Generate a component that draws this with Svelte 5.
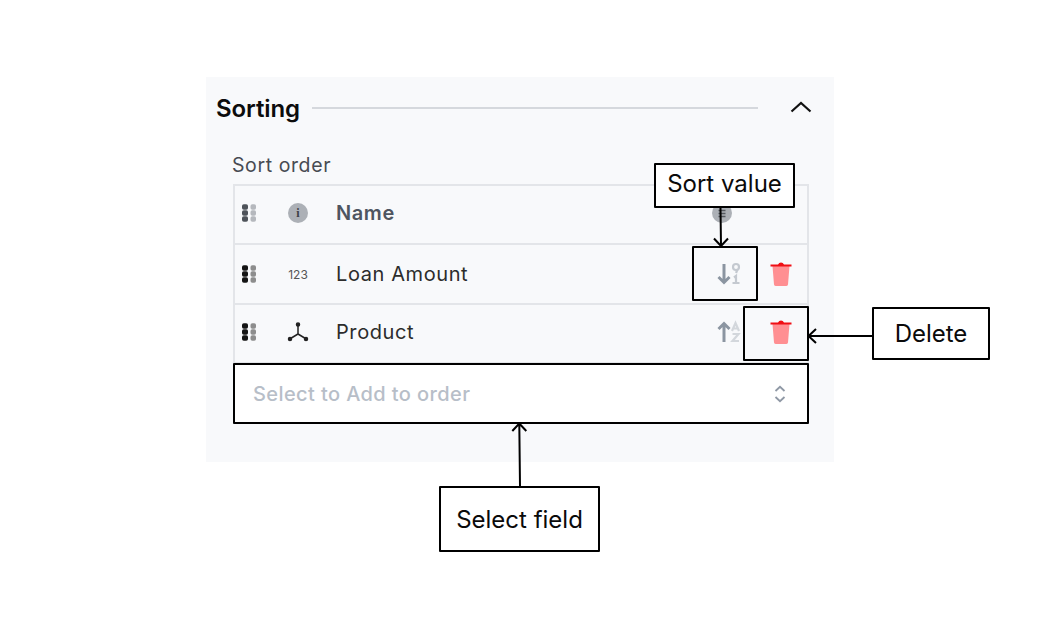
<script lang="ts">
	const rows = [
		{ name: 'Name', kind: 'info', sort: 'hidden', del: false, head: true },
		{ name: 'Loan Amount', kind: 'num', sort: 'down', del: true, head: false },
		{ name: 'Product', kind: 'tree', sort: 'up', del: true, head: false }
	];
</script>

<div class="page">
	<section class="panel">
		<header class="panel-head">
			<h2>Sorting</h2>
			<span class="rule"></span>
			<svg class="chevron" width="22" height="12" viewBox="0 0 22 12" fill="none">
				<path d="M1.500 10.500 11 2l9.500 8.500" stroke="#111" stroke-width="2.200" />
			</svg>
		</header>

		<div class="label">Sort order</div>
		<div class="table">
			{#each rows as row}
				<div class="row" class:head={row.head}>
					<svg class="grip" width="14" height="18" viewBox="0 0 14 18">
						{#each [3, 9, 15] as y}
							<rect x="0" y={y - 2.800} width="6" height="5.600" rx="1.800" class="dot-dark" />
							<rect x="8.500" y={y - 2.800} width="5.500" height="5.600" rx="1.800" class="dot-light" />
						{/each}
					</svg>
					<span class="type">
						{#if row.kind === 'info'}
							<span class="info">i</span>
						{:else if row.kind === 'num'}
							<span class="num">123</span>
						{:else}
							<svg width="22" height="20" viewBox="0 0 22 20" fill="none" stroke="#222" stroke-width="1.500">
								<path d="M11 3v9M11 12l-7.500 4.500M11 12l7.500 4.500" />
								<circle cx="11" cy="2.500" r="1.500" fill="#222" />
								<circle cx="3" cy="17" r="1.500" fill="#222" />
								<circle cx="19" cy="17" r="1.500" fill="#222" />
							</svg>
						{/if}
					</span>
					<span class="name">{row.name}</span>
					<span class="sort">
						{#if row.sort === 'hidden'}
							<svg class="sort-dot" width="20" height="20" viewBox="0 0 20 20" fill="none">
								<circle cx="10" cy="10" r="10" fill="#acb0b6" />
								<path d="M6.500 7.500h7M6.500 10.500h7M6.500 13.500h7" stroke="#55595f" stroke-width="1.400" />
							</svg>
						{:else if row.sort === 'down'}
							<svg width="26" height="24" viewBox="0 0 26 24" fill="none">
								<path d="M8 2v18.500M2.500 15 8 20.500 13.500 15" stroke="#8b95a1" stroke-width="3" />
								<circle cx="20" cy="5" r="3" stroke="#c4c9d0" stroke-width="2.200" />
								<path d="M21.500 7.500 20 11" stroke="#c4c9d0" stroke-width="2.200" />
								<path d="M18 15.500l2-1.500v6.500M16.500 21h7" stroke="#c4c9d0" stroke-width="2.200" />
							</svg>
						{:else}
							<svg width="26" height="24" viewBox="0 0 26 24" fill="none">
								<path d="M8 22V3.500M2.500 9 8 3.500 13.500 9" stroke="#8b95a1" stroke-width="3" />
								<path d="M16 11l3.500-8 3.500 8M17.200 8.500h4.600" stroke="#d3d7dc" stroke-width="2.200" />
								<path d="M16.500 14h6l-6 7h6.500" stroke="#d3d7dc" stroke-width="2.200" />
							</svg>
						{/if}
					</span>
					<span class="del">
						{#if row.del}
							<svg width="22" height="26" viewBox="0 0 22 26">
								<path d="M2.500 5h17l-1.500 18.500a2 2 0 0 1-2 1.500H6a2 2 0 0 1-2-1.500z" fill="#ff8f92" />
								<path d="M0.500 3.500h7.500q1-2 3-2t3 2h7.500v2h-21z" fill="#f00f14" />
							</svg>
						{/if}
					</span>
				</div>
			{/each}
			<div class="select">
				<span>Select to Add to order</span>
				<svg width="12" height="18" viewBox="0 0 12 18" fill="none" stroke="#8f98a5" stroke-width="1.800">
					<path d="M1.500 6 6 1.800 10.500 6M1.500 12 6 16.200 10.500 12" />
				</svg>
			</div>
		</div>
	</section>

	<!-- annotation layer -->
	<div class="mark mark-sort"></div>
	<div class="mark mark-delete"></div>
	<div class="mark mark-select"></div>

	<div class="note note-sort">Sort value</div>
	<div class="note note-delete">Delete</div>
	<div class="note note-select">Select field</div>

	<svg class="arrows" width="1040" height="620" fill="none" stroke="#000" stroke-width="2">
		<path d="M720.500 208 721 245.500M714 238.500l7 7.500 7-7.500" />
		<path d="M872 336H809M816 329l-7.500 7 7.500 7" />
		<path d="M520 486 519.300 424M512.300 431l7-7.500 7 7.500" />
	</svg>
</div>

<style>
	:global(body) {
		background: #fff;
	}

	.page {
		position: relative;
		box-sizing: border-box;
		width: 1040px;
		height: 620px;
		padding: 77px 206px 0;
		font-family: Inter, "Liberation Sans", sans-serif;
		overflow: hidden;
	}

	.panel {
		box-sizing: border-box;
		width: 628px;
		height: 385px;
		background: #f8f9fb;
		padding: 15px 22px 0 10px;
	}

	.panel-head {
		display: flex;
		align-items: center;
		height: 32px;
	}

	h2 {
		flex: none;
		margin: 0;
		width: 96px;
		font-size: 24px;
		font-weight: 600;
		letter-spacing: -0.1px;
		color: #0c0c0c;
	}

	.rule {
		flex: none;
		width: 446px;
		height: 2px;
		background: #d5d8dd;
	}

	.chevron {
		flex: none;
		margin: -3px 0 0 32px;
	}

	.label {
		margin: 30px 0 0 16px;
		height: 23px;
		line-height: 23px;
		font-size: 19.500px;
		letter-spacing: 0.6px;
		color: #474b52;
	}

	.table {
		box-sizing: border-box;
		margin: 7px 0 0 17px;
		width: 576px;
		height: 240px;
		border: 2px solid #e3e5e9;
		border-bottom-width: 1px;
	}

	.row {
		box-sizing: border-box;
		display: flex;
		align-items: center;
		height: 60px;
		padding: 0 15px 0 7px;
		border-bottom: 2px solid #e3e5e9;
	}

	.row:nth-child(odd) {
		height: 59px;
		padding-bottom: 3px;
	}

	.grip {
		flex: none;
	}

	.dot-dark {
		fill: #141414;
	}

	.dot-light {
		fill: #8d8d8d;
	}

	.head .dot-dark {
		fill: #4e535a;
	}

	.head .dot-light {
		fill: #b5b8bd;
	}

	.type {
		flex: none;
		display: flex;
		justify-content: center;
		width: 44px;
		margin-left: 20px;
	}

	.info {
		width: 20px;
		height: 20px;
		border-radius: 50%;
		background: #acb0b6;
		color: #3d4046;
		font-family: "Liberation Serif", serif;
		font-size: 12px;
		font-weight: 700;
		line-height: 20px;
		text-align: center;
	}

	.num {
		font-size: 12px;
		color: #555;
	}

	.name {
		margin-left: 16px;
		flex: 1;
		font-size: 20px;
		letter-spacing: 0.6px;
		color: #2c2c2c;
	}

	.head .name {
		font-weight: 600;
		color: #4e5560;
	}

	.sort {
		flex: none;
		display: flex;
		justify-content: flex-end;
		width: 34px;
		margin-right: 4px;
	}

	.sort-dot {
		margin-right: 10px;
	}

	.del {
		flex: none;
		display: flex;
		justify-content: flex-end;
		width: 32px;
		margin-left: 14px;
	}

	.select {
		box-sizing: border-box;
		display: flex;
		align-items: center;
		justify-content: space-between;
		height: 59px;
		padding: 0 21px 0 18px;
		background: #fff;
		font-size: 20px;
		font-weight: 500;
		letter-spacing: 0.4px;
		color: #b7bec8;
	}

	.mark {
		position: absolute;
		box-sizing: border-box;
		border: 2px solid #000;
		border-radius: 1px;
	}

	.mark-sort {
		left: 692px;
		top: 246px;
		width: 66px;
		height: 55px;
	}

	.mark-delete {
		left: 743px;
		top: 306px;
		width: 66px;
		height: 55px;
	}

	.mark-select {
		left: 233px;
		top: 363px;
		width: 576px;
		height: 61px;
	}

	.note {
		position: absolute;
		box-sizing: border-box;
		display: flex;
		align-items: center;
		justify-content: center;
		border: 2px solid #000;
		border-radius: 1px;
		background: #fff;
		font-size: 24px;
		color: #0a0a0a;
	}

	.note-sort {
		left: 654px;
		top: 163px;
		width: 141px;
		height: 45px;
		padding-bottom: 5px;
	}

	.note-delete {
		left: 872px;
		top: 307px;
		width: 118px;
		height: 53px;
		padding-bottom: 1px;
	}

	.note-select {
		left: 439px;
		top: 486px;
		width: 161px;
		height: 66px;
	}

	.arrows {
		position: absolute;
		left: 0;
		top: 0;
	}
</style>
